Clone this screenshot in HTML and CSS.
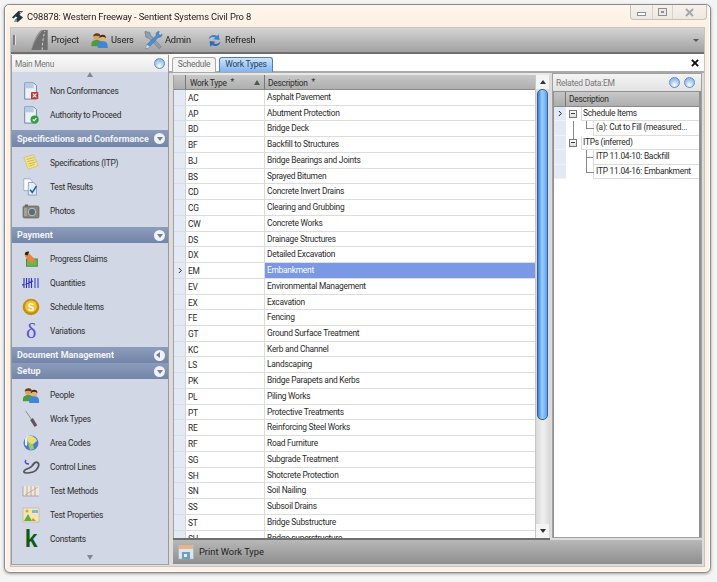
FILE: index.html
```html
<!DOCTYPE html>
<html lang="en">
<head>
<meta charset="utf-8">
<title>Sentient Systems Civil Pro 8</title>
<link rel="stylesheet" href="styles.css">
</head>
<body>
<svg class="defs" width="0" height="0">
  <defs>
    <symbol id="people" viewBox="0 0 20 20">
      <circle cx="7" cy="6.5" r="3.6" fill="#d9a066"/><path d="M3 6c0-4 7-5 8-1l-1 1c-2-1-5-1-7 0z" fill="#6b3a16"/>
      <path d="M1 15c0-4 3-5 6-5s6 1 6 5v2H1z" fill="#4f9a3c"/>
      <circle cx="13.5" cy="8" r="3.6" fill="#e3b27b"/><path d="M10 8c-1-5 8-5 7 0-2-2-5-2-7 0z" fill="#3f2a14"/>
      <path d="M8 17c0-4 2-5.500 5.500-5.500S19 13 19 17v2H8z" fill="#3f86d8"/>
    </symbol>
  </defs>
</svg>
<div class="window">
  <header class="titlebar">
    <svg class="app-icon" viewBox="0 0 16 16" width="15" height="15"><path d="M2 9 9 2h5l-4 4 4 3-6 5-3-2 3-3-2-1-2 2z" fill="#26323c"/><path d="M4 13l3-2 1 2-3 1z" fill="#4ba3d8"/><path d="M10 3h3l-2 2z" fill="#9fd0ee"/></svg>
    <span class="title-text">C98878: Western Freeway - Sentient Systems Civil Pro 8</span>
    <div class="win-controls">
      <span class="win-btn win-min"><i class="min-glyph"></i></span>
      <span class="win-btn win-max"><i class="max-glyph"></i></span>
      <span class="win-btn win-close"><svg viewBox="0 0 9 9" width="9" height="9"><path d="M1 1l7 7M8 1 1 8" stroke="#a4a8ad" stroke-width="2" fill="none"/></svg></span>
    </div>
  </header>

  <div class="frame">
    <nav class="toolbar">
      <i class="grip"></i>
      <div class="tool tool-project">
        <svg viewBox="0 0 18 22" width="19" height="20"><path d="M0 22C3 13 8 4 13 0h5v22z" fill="#6f6f6f"/><path d="M12 22c0-7 1-14 3-21" stroke="#d8d8d8" stroke-width="1" stroke-dasharray="3 2" fill="none"/><path d="M0 22C3 13 8 4 13 0l-2 0C6 4 2 13 0 22z" fill="#8d8d8d"/></svg>
        <span>Project</span>
      </div>
      <div class="tool tool-users"><svg width="19" height="18"><use href="#people"/></svg><span>Users</span></div>
      <div class="tool tool-admin">
        <svg viewBox="0 0 20 20" width="19" height="20"><path d="M1 1l5 1 1 3 11 12-2 2L5 8 2 7z" fill="#8fa0b0" stroke="#4f5f70" stroke-width=".5"/><path d="M16 1c-3 0-4 3-3 4L3 15l-1 4 3-1L15 7c2 1 4-1 4-3l-2 1-2-1 1-3z" fill="#4a90d8" stroke="#2f5f96" stroke-width=".5"/><path d="M3 15l3 2-1 1-3 1z" fill="#ddd"/></svg>
        <span>Admin</span>
      </div>
      <div class="tool tool-refresh">
        <svg viewBox="0 0 18 19" width="15" height="17"><path d="M2 8c0-4 6-7 10-4l2-2 1 7-7-1 2-2c-2-1-5-1-8 2z" fill="#3d7fd0"/><path d="M16 11c0 4-6 7-10 4l-2 2-1-7 7 1-2 2c2 1 5 1 8-2z" fill="#2b69bd"/></svg>
        <span>Refresh</span>
      </div>
      <i class="toolbar-more"></i>
    </nav>

    <div class="workspace">
      <aside class="sidebar">
        <div class="panel-head">
          <span>Main Menu</span>
          <i class="orb"></i>
        </div>
        <div class="scroll-strip strip-top"><i class="tri-up"></i></div>
        <div class="menu-list">
          <div class="menu-section first">
            <div class="menu-item">
              <svg class="mi" viewBox="0 0 18 20"><path d="M2 1h10l3 3v15H2z" fill="#eef2f8" stroke="#5f7ea6"/><path d="M2 1h10v6H2z" fill="#b8cbe2"/><rect x="9" y="11" width="8" height="8" rx="1" fill="#c9352b"/><path d="M11 13l4 4m0-4-4 4" stroke="#fff" stroke-width="1.300"/></svg>
              <span>Non Conformances</span>
            </div>
            <div class="menu-item">
              <svg class="mi" viewBox="0 0 18 20"><path d="M2 1h10l3 3v15H2z" fill="#eef2f8" stroke="#5f7ea6"/><path d="M2 1h10v6H2z" fill="#b8cbe2"/><circle cx="13" cy="15" r="4.500" fill="#2f9e3b"/><path d="M11 15l1.500 1.500L15 13.500" stroke="#fff" stroke-width="1.300" fill="none"/></svg>
              <span>Authority to Proceed</span>
            </div>
          </div>
          <div class="section-head head-tall"><span>Specifications and Conformance</span><i class="chev chev-down"></i></div>
          <div class="menu-section">
            <div class="menu-item">
              <svg class="mi" viewBox="0 0 18 20"><path d="M1 4l11-3 5 12-11 4z" fill="#f5e48a" stroke="#cdb956" stroke-width=".7"/><path d="M4 6l8-2M5 8.500l8-2M6 11l8-2M7 13.500l6-2" stroke="#b8a648" stroke-width=".8"/></svg>
              <span>Specifications (ITP)</span>
            </div>
            <div class="menu-item">
              <svg class="mi" viewBox="0 0 18 20"><path d="M1 1h7l2 2v11H1z" fill="#fff" stroke="#7f94b2" stroke-width=".7"/><path d="M6 5h6l3 3v11H6z" fill="#e5edf7" stroke="#5f7ea6" stroke-width=".7"/><path d="M8 13l2.500 3L15 9" stroke="#1f5fb0" stroke-width="1.800" fill="none"/></svg>
              <span>Test Results</span>
            </div>
            <div class="menu-item">
              <svg class="mi" viewBox="0 0 18 16"><rect x="1" y="3" width="16" height="12" rx="1.500" fill="#85857c" stroke="#55554e" stroke-width=".6"/><rect x="3" y="1.500" width="3" height="2" fill="#66665f"/><circle cx="10" cy="9" r="3.800" fill="#5b6d78" stroke="#c3c5be"/><rect x="2" y="5" width="3" height="8" fill="#a2a298"/></svg>
              <span>Photos</span>
            </div>
          </div>
          <div class="section-head"><span>Payment</span><i class="chev chev-down"></i></div>
          <div class="menu-section">
            <div class="menu-item">
              <svg class="mi" viewBox="0 0 18 20"><rect x="4" y="10" width="12" height="8" fill="#6fb455" stroke="#3f8a30"/><path d="M2 6l4-3 7 7-2 5-4-2z" fill="#e8863c"/><path d="M2 5c0-3 3-4 5-3L5 6z" fill="#2b2016"/></svg>
              <span>Progress Claims</span>
            </div>
            <div class="menu-item">
              <svg class="mi" viewBox="0 0 18 14"><path d="M2 2v10M4.500 2v10M7 2v10M9.500 2v10M0 9l11-4" stroke="#2c2fc2" stroke-width="1.100" fill="none"/><path d="M13 2v10M16 2v10" stroke="#6d70d8" stroke-width="1.600"/></svg>
              <span>Quantities</span>
            </div>
            <div class="menu-item">
              <svg class="mi" viewBox="0 0 18 18"><circle cx="9" cy="9" r="8.300" fill="#c48f10"/><circle cx="9" cy="8.500" r="6" fill="#f2c230"/><text x="9" y="12.500" text-anchor="middle" class="coin">S</text></svg>
              <span>Schedule Items</span>
            </div>
            <div class="menu-item">
              <span class="delta mi">δ</span>
              <span>Variations</span>
            </div>
          </div>
          <div class="section-head"><span>Document Management</span><i class="chev chev-left"></i></div>
          <div class="section-head"><span>Setup</span><i class="chev chev-down"></i></div>
          <div class="menu-section">
            <div class="menu-item"><svg class="mi"><use href="#people"/></svg><span>People</span></div>
            <div class="menu-item">
              <svg class="mi" viewBox="0 0 18 20"><path d="M3 1l7 10" stroke="#8a7a70" stroke-width=".9"/><path d="M8 11l3-2 5 8-3 2z" fill="#5f5460"/></svg>
              <span>Work Types</span>
            </div>
            <div class="menu-item">
              <svg class="mi" viewBox="0 0 18 18"><circle cx="9" cy="9" r="7.500" fill="#4c78d8"/><path d="M6 2c3-1 8 1 9 5l-5 4-4-3z" fill="#e8e070"/><path d="M6 9l5 1 1 5-4 1z" fill="#9fce58"/><path d="M3 5c1-2 2-3 3-3L5 12 3 11z" fill="#f0f4fb"/></svg>
              <span>Area Codes</span>
            </div>
            <div class="menu-item">
              <svg class="mi" viewBox="0 0 18 18"><path d="M2 14c-1-3 6-3 8-6s4-5 6-3-1 8-5 9-8 2-9 0z" fill="none" stroke="#55555a" stroke-width="1.800"/><path d="M4 2c-2 2 0 4 3 4" stroke="#4a4ad0" stroke-width="1.400" fill="none"/></svg>
              <span>Control Lines</span>
            </div>
            <div class="menu-item">
              <svg class="mi" viewBox="0 0 18 12"><rect x="1" y="1" width="16" height="10" fill="#eee8df"/><path d="M1 1v10h16M5 1v10M9 1v10M13 1v10" stroke="#9c9488" stroke-width=".7" fill="none"/><path d="M3 10 16 2" stroke="#d99a74" stroke-width=".8"/></svg>
              <span>Test Methods</span>
            </div>
            <div class="menu-item">
              <svg class="mi" viewBox="0 0 18 16"><rect x="1" y="1" width="16" height="14" fill="#f0e8b0" stroke="#b9b9b0" stroke-width=".7"/><path d="M2 14l4-7 4 7z" fill="#64a845"/><path d="M9 14l2-3 3 3z" fill="#d98a3c"/><rect x="10" y="3" width="6" height="3" fill="#8db0e0"/><circle cx="5" cy="4" r="1.500" fill="#e8a030"/></svg>
              <span>Test Properties</span>
            </div>
            <div class="menu-item">
              <span class="kay mi">k</span>
              <span>Constants</span>
            </div>
            <div class="menu-item">
              <svg class="mi" viewBox="0 0 18 18"><path d="M6 0h6" stroke="#5a5ac8" stroke-width="1.200"/></svg>
            </div>
          </div>
        </div>
        <div class="scroll-strip strip-bottom"><i class="tri-down"></i></div>
      </aside>

      <main class="content">
        <div class="tabstrip">
          <span class="tab">Schedule</span>
          <span class="tab tab-active">Work Types</span>
          <svg class="tab-close" viewBox="0 0 9 9" width="8" height="8"><path d="M1 1l7 7M8 1 1 8" stroke="#111" stroke-width="2.200"/></svg>
        </div>
        <div class="panes">
          <section class="grid-pane">
            <div class="grid-head">
              <i class="gutter-head"></i>
              <div class="col-type">Work Type <b>*</b><i class="sort-tri"></i></div>
              <div class="col-desc">Description <b>*</b></div>
            </div>
            <div class="grid-body">
              <div class="row"><i class="gut"></i><span class="c1">AC</span><span class="c2">Asphalt Pavement</span></div>
              <div class="row"><i class="gut"></i><span class="c1">AP</span><span class="c2">Abutment Protection</span></div>
              <div class="row"><i class="gut"></i><span class="c1">BD</span><span class="c2">Bridge Deck</span></div>
              <div class="row"><i class="gut"></i><span class="c1">BF</span><span class="c2">Backfill to Structures</span></div>
              <div class="row"><i class="gut"></i><span class="c1">BJ</span><span class="c2">Bridge Bearings and Joints</span></div>
              <div class="row"><i class="gut"></i><span class="c1">BS</span><span class="c2">Sprayed Bitumen</span></div>
              <div class="row"><i class="gut"></i><span class="c1">CD</span><span class="c2">Concrete Invert Drains</span></div>
              <div class="row"><i class="gut"></i><span class="c1">CG</span><span class="c2">Clearing and Grubbing</span></div>
              <div class="row"><i class="gut"></i><span class="c1">CW</span><span class="c2">Concrete Works</span></div>
              <div class="row"><i class="gut"></i><span class="c1">DS</span><span class="c2">Drainage Structures</span></div>
              <div class="row"><i class="gut"></i><span class="c1">DX</span><span class="c2">Detailed Excavation</span></div>
              <div class="row row-selected"><i class="gut"><svg viewBox="0 0 6 8" width="5" height="7"><path d="M1 1l3 3-3 3" stroke="#222" stroke-width="1.200" fill="none"/></svg></i><span class="c1">EM</span><span class="c2">Embankment</span></div>
              <div class="row"><i class="gut"></i><span class="c1">EV</span><span class="c2">Environmental Management</span></div>
              <div class="row"><i class="gut"></i><span class="c1">EX</span><span class="c2">Excavation</span></div>
              <div class="row"><i class="gut"></i><span class="c1">FE</span><span class="c2">Fencing</span></div>
              <div class="row"><i class="gut"></i><span class="c1">GT</span><span class="c2">Ground Surface Treatment</span></div>
              <div class="row"><i class="gut"></i><span class="c1">KC</span><span class="c2">Kerb and Channel</span></div>
              <div class="row"><i class="gut"></i><span class="c1">LS</span><span class="c2">Landscaping</span></div>
              <div class="row"><i class="gut"></i><span class="c1">PK</span><span class="c2">Bridge Parapets and Kerbs</span></div>
              <div class="row"><i class="gut"></i><span class="c1">PL</span><span class="c2">Piling Works</span></div>
              <div class="row"><i class="gut"></i><span class="c1">PT</span><span class="c2">Protective Treatments</span></div>
              <div class="row"><i class="gut"></i><span class="c1">RE</span><span class="c2">Reinforcing Steel Works</span></div>
              <div class="row"><i class="gut"></i><span class="c1">RF</span><span class="c2">Road Furniture</span></div>
              <div class="row"><i class="gut"></i><span class="c1">SG</span><span class="c2">Subgrade Treatment</span></div>
              <div class="row"><i class="gut"></i><span class="c1">SH</span><span class="c2">Shotcrete Protection</span></div>
              <div class="row"><i class="gut"></i><span class="c1">SN</span><span class="c2">Soil Nailing</span></div>
              <div class="row"><i class="gut"></i><span class="c1">SS</span><span class="c2">Subsoil Drains</span></div>
              <div class="row"><i class="gut"></i><span class="c1">ST</span><span class="c2">Bridge Substructure</span></div>
              <div class="row"><i class="gut"></i><span class="c1">SU</span><span class="c2">Bridge superstructure</span></div>
            </div>
            <div class="vscroll">
              <span class="sb-btn"><i class="tri-small-up"></i></span>
              <div class="sb-track"><div class="sb-thumb"></div></div>
              <span class="sb-btn"><i class="tri-small-down"></i></span>
            </div>
          </section>
          <section class="related">
            <div class="related-head">
              <span>Related Data:EM</span>
              <i class="orb"></i><i class="orb"></i>
            </div>
            <div class="tree">
              <div class="tree-head"><i class="gutter-head small"></i><div>Description</div></div>
              <div class="tree-rows">
                <div class="tree-row">
                  <i class="tree-gut"><svg viewBox="0 0 6 8" width="5" height="7"><path d="M1 1l3 3-3 3" stroke="#222" stroke-width="1.200" fill="none"/></svg></i>
                  <i class="node"><b class="box"></b></i><span class="tree-cell">Schedule Items</span>
                </div>
                <div class="tree-row level2">
                  <i class="tree-gut"></i>
                  <i class="node line-mid"></i><i class="node2 elbow"></i><span class="tree-cell">(a): Cut to Fill (measured...</span>
                </div>
                <div class="tree-row">
                  <i class="tree-gut"></i>
                  <i class="node line-top"><b class="box"></b></i><span class="tree-cell">ITPs (inferred)</span>
                </div>
                <div class="tree-row level2">
                  <i class="tree-gut"></i>
                  <i class="node"></i><i class="node2 tee"></i><span class="tree-cell">ITP 11.04-10: Backfill</span>
                </div>
                <div class="tree-row level2">
                  <i class="tree-gut"></i>
                  <i class="node"></i><i class="node2 elbow"></i><span class="tree-cell">ITP 11.04-16: Embankment</span>
                </div>
              </div>
            </div>
          </section>
        </div>
        <footer class="printbar">
          <svg viewBox="0 0 16 16" width="16" height="16"><rect x="0.500" y="1" width="15" height="14" fill="#d9e6ee" stroke="#9db0bb" stroke-width=".6"/><rect x="1" y="1" width="14" height="4" fill="#e9b48c"/><rect x="4" y="8" width="8" height="7" fill="#6f9fbd"/><rect x="6" y="10" width="3" height="3" fill="#e8f0f5"/></svg>
          <span>Print Work Type</span>
        </footer>
      </main>
    </div>
  </div>
</div>
</body>
</html>
```

FILE: styles.css
```css
* { box-sizing: border-box; }
html, body { margin: 0; height: 100%; }
body {
  background: #f4f4f4;
  padding: 4px 6px 9px 4px;
  font-family: Roboto, "Liberation Sans", sans-serif;
  font-size: 8.400px;
  letter-spacing: -.25px;
  color: #2a2a2a;
  overflow: hidden;
}
i { display: block; font-style: normal; }
.defs { position: absolute; }

.window {
  height: 569px;
  width: 707px;
  display: flex;
  flex-direction: column;
  background: #fdf0e3;
  border: 1px solid #8b8b8b;
  border-radius: 5px 5px 6px 6px;
  box-shadow: 0 1px 3px rgba(0,0,0,.35), inset 0 0 0 1px #fff;
  padding: 0 5px 5px 5px;
  filter: blur(.4px);
}
.titlebar {
  height: 22px;
  flex: none;
  display: flex;
  align-items: center;
  gap: 2px;
  padding-left: 4px;
  position: relative;
  background: linear-gradient(#fff5ea, #fdf0e3);
  margin: 0 -4px;
  border-radius: 4px 4px 0 0;
}
.title-text { font-size: 9.400px; letter-spacing: -.15px; color: #1d1d1d; }
.win-controls {
  margin-left: auto;
  margin-right: 2px;
  align-self: flex-start;
  display: flex;
  height: 15px;
  border: 1px solid #c4c0ba;
  border-top: 0;
  border-radius: 0 0 4px 4px;
  background: linear-gradient(#f6f1ec, #eee8e1);
}
.win-btn { display: flex; align-items: center; justify-content: center; border-right: 1px solid #d6d2cc; }
.win-min { width: 22px; }
.win-max { width: 20px; }
.win-close { width: 33px; border-right: 0; }
.min-glyph { width: 9px; height: 4px; border: 1px solid #8c9096; margin-top: 4px; background: #fff; }
.max-glyph { width: 9px; height: 8px; border: 1px solid #8c9096; box-shadow: inset 0 0 0 2px #eee8e2, inset 0 0 0 3px #8c9096; }

.frame {
  flex: 1;
  min-height: 0;
  display: flex;
  flex-direction: column;
  background: #e3e3e3;
  border: 1px solid #c4c4c4;
}
.toolbar {
  height: 26px;
  flex: none;
  display: flex;
  align-items: center;
  position: relative;
  background: linear-gradient(#d4d4d4, #a2a2a2);
  border-bottom: 2px solid #6e6e6e;
  padding-left: 2px;
  font-size: 9.300px;
  letter-spacing: -.2px;
  color: #1d1d1d;
}
.grip { width: 2px; height: 10px; background: #7d7d7d; box-shadow: 1px 0 0 #e4e4e4; margin-right: 15px; }
.tool { display: flex; align-items: center; }
.tool span { padding-bottom: 1px; }
.tool-project { width: 60px; gap: 2px; }
.tool-users { width: 54px; gap: 2px; }
.tool-admin { width: 63px; gap: 2px; }
.tool-refresh { gap: 3px; }
.toolbar-more {
  margin-left: auto;
  margin-right: 5px;
  border: 3px solid transparent;
  border-top: 3px solid #555;
  border-bottom: 0;
}

.workspace { flex: 1; min-height: 0; display: flex; }

.sidebar {
  width: 158px;
  flex: none;
  display: flex;
  flex-direction: column;
  background: #d1d7e4;
  border-left: 1px solid #9a9a9a;
  border-right: 1px solid #9a9a9a;
  border-bottom: 1px solid #a2a2a2;
  margin-top: 1px;
  margin-bottom: 1px;
}
.panel-head {
  height: 17px;
  flex: none;
  display: flex;
  align-items: center;
  justify-content: space-between;
  padding: 0 3px;
  background: linear-gradient(#fafafa, #e9e9e9);
  color: #777;
  font-size: 8.300px;
}
.orb {
  width: 11px;
  height: 11px;
  border-radius: 50%;
  border: 1px solid #5f8fd0;
  background: radial-gradient(circle at 50% 75%, #fff 0, #b4d0f2 45%, #7fa9e0 100%);
  flex: none;
}
.scroll-strip { flex: none; display: flex; justify-content: center; }
.strip-top { height: 7px; }
.strip-bottom { height: 11px; padding-top: 2px; background: #d1d7e4; }
.tri-up { width: 0; height: 0; border: 3px solid transparent; border-top: 0; border-bottom: 5px solid #82868e; }
.tri-down { width: 0; height: 0; border: 3px solid transparent; border-bottom: 0; border-top: 5px solid #82868e; }
.menu-list { flex: 1; min-height: 0; overflow: hidden; }
.menu-section { padding: 4px 0; }
.menu-section.first { padding: 0 0 3px; }
.menu-item {
  height: 24px;
  display: flex;
  align-items: center;
  padding-left: 10px;
  color: #2d2d2d;
}
.mi { width: 18px; height: 18px; margin-right: 10px; flex: none; display: block; }
.coin { font: bold 10px "Liberation Sans", sans-serif; fill: #fff; }
.delta { font: 22px/18px "Liberation Serif", serif; color: #5a50d8; text-align: center; }
.kay { font: bold 23px/18px "Liberation Sans", sans-serif; color: #0f5a14; text-align: center; }
.section-head {
  height: 16px;
  display: flex;
  align-items: center;
  justify-content: space-between;
  padding: 0 3px 0 5px;
  background: linear-gradient(#8c9cbc, #7385a8);
  color: #f1f4fa;
  font: bold 9px Roboto, "Liberation Sans", sans-serif;
  letter-spacing: 0;
  white-space: nowrap;
}
.head-tall { height: 17px; }
.section-head span { overflow: hidden; }
.chev { width: 11px; height: 11px; border-radius: 50%; background: #f0f3f8; flex: none; margin-left: 3px; position: relative; }
.chev::after { content: ""; position: absolute; border: 3px solid transparent; }
.chev-down::after { left: 2.500px; top: 4px; border-top: 4px solid #6c7ea2; border-bottom: 0; }
.chev-left::after { left: 2px; top: 2.500px; border-right: 4px solid #6c7ea2; border-left: 0; }

.content { flex: 1; min-width: 0; display: flex; flex-direction: column; padding: 0 2px 0 4px; background: #dcdcdc; }
.tabstrip {
  height: 19px;
  flex: none;
  display: flex;
  align-items: flex-end;
  gap: 3px;
  margin: 0 -2px 0 -4px;
  padding-left: 3px;
  background: #fff;
  border-bottom: 2px solid #a9a9a9;
  position: relative;
}
.tab {
  height: 15px;
  width: 44px;
  text-align: center;
  line-height: 13px;
  font-size: 8.500px;
  color: #6a6a6a;
  background: #f3f3f3;
  border: 1px solid #a8a8a8;
  border-bottom: 0;
  border-radius: 3px 3px 0 0;
  margin-bottom: -1px;
}
.tab-active { width: 54px; color: #27405f; background: linear-gradient(#cfe4fb, #7fb4ee); border-color: #4f7fb8; }
.tab-close { margin-left: auto; margin-right: 5px; align-self: center; }

.panes { flex: 1; min-height: 0; display: flex; }
.grid-pane {
  width: 377px;
  flex: none;
  display: grid;
  grid-template-columns: 1fr 15px;
  grid-template-rows: 15px 1fr;
  padding: 2px 0 0;
  background: #e8e8e8;
  border-bottom: 2px solid #6e6e6e;
  min-height: 0;
  overflow: hidden;
}
.grid-head {
  display: flex;
  background: linear-gradient(#c8c8c8, #aeaeae);
  border-bottom: 1px solid #8a8a8a;
  border-left: 1px solid #a0a0a0;
  line-height: 14px;
  color: #2a2a2a;
}
.grid-head b { font-weight: 400; vertical-align: 1px; margin-left: 2px; }
.gutter-head { width: 12px; flex: none; background: linear-gradient(#c4c4c4, #adadad); border-right: 1px solid #777; }
.col-type { width: 79px; flex: none; padding-left: 4px; border-right: 1px solid #777; position: relative; }
.col-desc { flex: 1; padding-left: 3px; }
.sort-tri { position: absolute; right: 4px; top: 5px; border: 3px solid transparent; border-top: 0; border-bottom: 5px solid #555; }
.grid-body { grid-column: 1; min-height: 0; overflow: hidden; background: #fff; border-left: 1px solid #a0a0a0; }
.row { height: 15.740px; display: flex; border-bottom: 1px solid #dcdcdc; line-height: 14px; }
.gut { width: 12px; flex: none; background: #e3e9f5; display: flex; align-items: center; justify-content: center; border-right: 1px solid #d4d4d4; padding-left: 1px; }
.c1 { width: 79px; flex: none; padding-left: 2px; border-right: 1px solid #dcdcdc; padding-top: 1px; }
.c2 { flex: 1; padding-left: 2px; }
.row-selected .c2 { background: #7a98e4; color: #fff; }
.vscroll {
  grid-column: 2;
  grid-row: 1 / 3;
  display: flex;
  flex-direction: column;
  background: linear-gradient(90deg, #d8d8d8, #f0f0f0, #d8d8d8);
  border-left: 1px solid #c8c8c8;
  padding: 0 1px 0 0;
}
.sb-btn { height: 14px; flex: none; display: flex; align-items: center; justify-content: center; background: #f4f4f4; }
.tri-small-up { border: 3px solid transparent; border-top: 0; border-bottom: 4px solid #333; }
.tri-small-down { border: 3px solid transparent; border-bottom: 0; border-top: 4px solid #333; }
.sb-track { flex: 1; padding: 0 1px; }
.sb-thumb {
  height: 331px;
  border: 1px solid #33619f;
  border-radius: 5px;
  background: linear-gradient(90deg, #3d7fd8, #9cd0ff 45%, #5f9eea);
}

.related {
  flex: 1;
  min-width: 0;
  margin: 0 0 2px 2px;
  display: flex;
  flex-direction: column;
  background: #e8e8e8;
  border: 1px solid #a0a0a0;
}
.related-head {
  height: 17px;
  flex: none;
  display: flex;
  align-items: center;
  gap: 4px;
  padding: 0 6px 0 3px;
  color: #777;
  font-size: 8.500px;
  background: linear-gradient(#f4f4f4, #e2e2e2);
}
.related-head span { margin-right: auto; }
.tree { flex: 1; min-height: 0; background: #fff; border: 1px solid #909090; border-width: 1px 2px 0 1px; }
.tree-head { height: 15px; display: flex; background: linear-gradient(#c8c8c8, #aeaeae); border-bottom: 1px solid #8a8a8a; line-height: 14px; }
.tree-head div { padding-left: 3px; }
.gutter-head.small { width: 12px; }
.tree-row { height: 14.400px; display: flex; align-items: stretch; line-height: 13px; }
.tree-gut { width: 12px; flex: none; background: #e3e9f5; border-bottom: 1px solid #f2f2f2; display: flex; align-items: center; justify-content: center; }
.node { width: 15px; flex: none; position: relative; }
.node2 { width: 12px; flex: none; position: relative; }
.box {
  position: absolute;
  left: 3px;
  top: 3px;
  width: 8px;
  height: 8px;
  border: 1px solid #777;
  background: linear-gradient(#fff, #ddd);
}
.box::after { content: ""; position: absolute; left: 1px; top: 2px; width: 4px; height: 1px; background: #333; }
.line-mid::before { content: ""; position: absolute; left: 7px; top: 0; bottom: 0; width: 1px; background: #888; }
.line-top::before { content: ""; position: absolute; left: 7px; top: -3px; height: 6px; width: 1px; background: #888; }
.elbow::before { content: ""; position: absolute; left: 5px; top: 0; width: 7px; height: 7px; border-left: 1px solid #888; border-bottom: 1px solid #888; }
.tee::before { content: ""; position: absolute; left: 5px; top: 0; bottom: 0; width: 1px; background: #888; }
.tee::after { content: ""; position: absolute; left: 5px; top: 7px; height: 1px; width: 7px; background: #888; }
.tree-cell { flex: 1; min-width: 0; white-space: nowrap; overflow: hidden; border-bottom: 1px solid #dcdcdc; border-left: 1px solid #dcdcdc; padding-left: 1px; }
.level2 .tree-cell { padding-left: 2px; }

.printbar {
  height: 24px;
  flex: none;
  display: flex;
  align-items: center;
  gap: 5px;
  padding: 0 0 1px 5px;
  background: linear-gradient(#b8b8b8, #8e8e8e);
  margin-bottom: 2px;
  font-size: 9.300px;
  letter-spacing: 0;
  color: #1d1d1d;
}
```
